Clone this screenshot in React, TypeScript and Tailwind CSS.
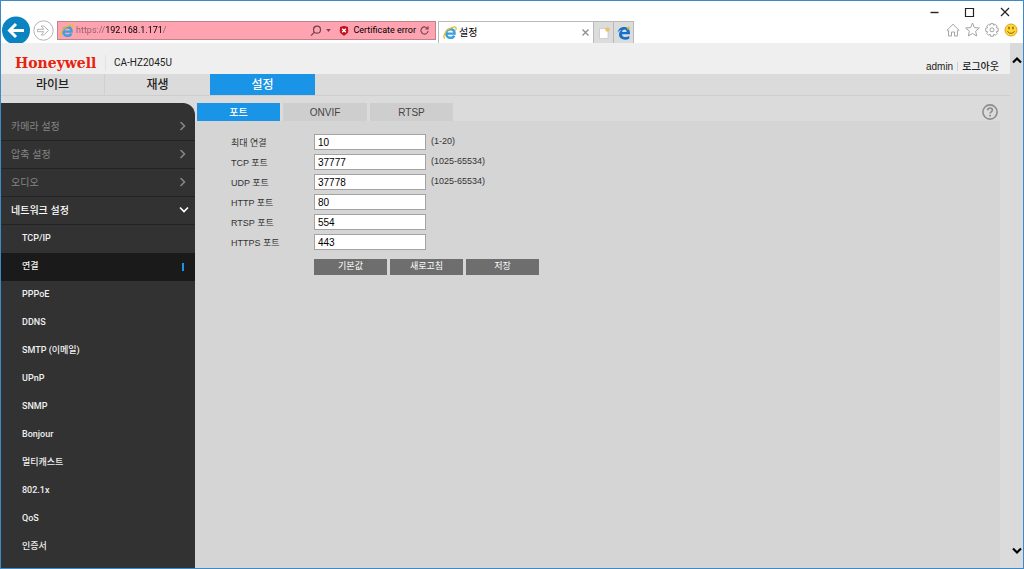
import React, { useState } from 'react';

const MENU = ['카메라 설정', '압축 설정', '오디오'];

const NETWORK_MENU = [
  'TCP/IP',
  '연결',
  'PPPoE',
  'DDNS',
  'SMTP (이메일)',
  'UPnP',
  'SNMP',
  'Bonjour',
  '멀티캐스트',
  '802.1x',
  'QoS',
  '인증서',
];

const FIELDS = [
  { id: 'max', label: '최대 연결', value: '10', hint: '(1-20)' },
  { id: 'tcp', label: 'TCP 포트', value: '37777', hint: '(1025-65534)' },
  { id: 'udp', label: 'UDP 포트', value: '37778', hint: '(1025-65534)' },
  { id: 'http', label: 'HTTP 포트', value: '80', hint: '' },
  { id: 'rtsp', label: 'RTSP 포트', value: '554', hint: '' },
  { id: 'https', label: 'HTTPS 포트', value: '443', hint: '' },
];

const IeLogo = () => (
  <svg className="w-[14px] h-[14px] shrink-0" viewBox="0 0 14 14" fill="none">
    <path d="M3.4 7.6h8.2C11.6 4.8 9.9 3.2 7.5 3.2S3.3 5 3.3 7.5s1.7 4.3 4.2 4.3c1.8 0 3.1-.8 3.8-2.2" stroke="#3aa0de" strokeWidth="2.4" />
    <path d="M2.2 12.6C-.2 12 .7 8 4 4.6 7.4 1.2 12 .1 12.9 1.6c.4.7.2 1.8-.4 2.9" stroke="#e9bd2c" strokeWidth="1.3" />
  </svg>
);

const Chevron = ({ d, width = 1.6 }: { d: string; width?: number }) => (
  <svg className="w-[10px] h-[10px] shrink-0" viewBox="0 0 10 10" fill="none" stroke="currentColor" strokeWidth={width}>
    <path d={d} />
  </svg>
);

const BrowserBar = () => (
  <div className="shrink-0 bg-white text-[10px] font-['Roboto','Noto_Sans_CJK_KR',sans-serif]">
    {/* Window buttons */}
    <div className="h-5 flex justify-end items-end gap-[19px] pr-[10px]">
      <button aria-label="Minimize">
        <svg className="w-4 h-4" viewBox="0 0 16 16" stroke="#222"><path d="M3.5 7.5h8" strokeWidth="1.4" /></svg>
      </button>
      <button aria-label="Maximize">
        <svg className="w-4 h-4" viewBox="0 0 16 16" fill="none" stroke="#222"><path d="M3.5 3.5h8v8h-8z" strokeWidth="1.2" /></svg>
      </button>
      <button aria-label="Close">
        <svg className="w-4 h-4" viewBox="0 0 16 16" stroke="#222"><path d="M4 3l8 8M12 3l-8 8" strokeWidth="1.2" /></svg>
      </button>
    </div>

    {/* Address bar and tabs */}
    <div className="h-[22px] flex items-start">
      <button aria-label="Back" className="w-8 h-[22px] flex items-end">
        <svg className="w-[30px] h-[27px] shrink-0" viewBox="0 0 30 27" fill="none">
          <circle cx="15" cy="14.5" r="14" fill="#0a84c1" />
          <path d="M23 14.5H9M15 8l-6.5 6.5 6.5 6.5" stroke="#fff" strokeWidth="3" />
        </svg>
      </button>
      <button aria-label="Forward" className="w-6 h-[19px] flex items-center">
        <svg className="w-[21px] h-[21px] shrink-0" viewBox="0 0 21 21" fill="none" stroke="#b3b3b3">
          <circle cx="10.5" cy="10.5" r="9.7" />
          <path d="M4.5 9.3h6.3L8.2 6h2.6l4.7 4.5-4.7 4.500H8.200l2.600-3.300H4.500z" />
        </svg>
      </button>
      <div className="w-[379px] h-[19px] flex items-center border border-[#b8858e] bg-[#ffa3b1] px-[2px] text-[9px]">
        <IeLogo />
        <input
          type="text"
          aria-label="Address"
          defaultValue="https://192.168.1.171/"
          className="flex-1 min-w-0 ml-[2px] bg-[linear-gradient(90deg,#8d6068_30px,#000_30px,#000_87px,#8d6068_87px)] bg-clip-text text-transparent outline-none"
        />
        <button aria-label="Search" className="flex items-center">
          <svg className="w-3 h-3" viewBox="0 0 12 12" fill="none" stroke="#6e464d" strokeWidth="1.2">
            <circle cx="7" cy="4.7" r="3.5" />
            <path d="M4.500 7.200L1 10.700" />
          </svg>
          <svg className="w-[5px] h-[3px] ml-1" viewBox="0 0 6 4"><path d="M0 0h6L3 4z" fill="#6e464d" /></svg>
        </button>
        <svg className="w-[10px] h-[10px] ml-2 mr-1" viewBox="0 0 10 10">
          <path d="M1 1l4-1 4 1v5L5 10 1 6z" fill="#c3141c" />
          <circle cx="5" cy="4.5" r="4.3" fill="#c3141c" />
          <path d="M3.200 2.700l3.600 3.600M6.800 2.700L3.200 6.300" stroke="#fff" strokeWidth="1.4" />
        </svg>
        <span className="text-black">Certificate error</span>
        <button aria-label="Refresh" className="mx-1">
          <svg className="w-[9px] h-[9px]" viewBox="0 0 10 10" fill="none" stroke="#6e464d" strokeWidth="1.2">
            <path d="M8.500 3A4 4 0 1 0 9 5.500M9 .3v3H6" />
          </svg>
        </button>
      </div>
      <div className="flex h-[22px] ml-[2px] border-x border-t border-[#b9b9b9]">
        <div className="w-[154px] flex items-center px-1 text-black">
          <IeLogo />
          <span className="flex-1 ml-[2px]">설정</span>
          <button aria-label="Close tab">
            <svg className="w-[7px] h-[7px]" viewBox="0 0 7 7" stroke="#8f8f8f"><path d="M.5.5l6 6M6.500.5l-6 6" strokeWidth="1.4" /></svg>
          </button>
        </div>
        <button aria-label="New tab" className="w-5 flex items-center justify-center border-l border-[#b9b9b9] bg-[#dcdcdc]">
          <svg className="w-3 h-3" viewBox="0 0 12 12">
            <path d="M1.500 1.500h6l2.500 2.500v7.500H1.500z" fill="#fff" stroke="#bbb" strokeWidth=".6" />
            <circle cx="9.5" cy="2.5" r="2.2" fill="#eac46c" />
          </svg>
        </button>
        <button aria-label="Edge" className="w-5 flex items-center justify-center border-l border-[#b9b9b9] bg-[#dcdcdc]">
          <svg className="w-[14px] h-[14px]" viewBox="0 0 14 14">
            <path d="M.7 6.500C1.200 3 3.700.9 7 .9c3.700 0 6 2.600 6 6v1.300H5c.1 2 1.600 2.900 3.600 2.900 1.400 0 2.700-.4 3.700-1v2.700c-1.200.6-2.600.9-4.200.9C4.500 13.700 2 11.800 2 8.600c0-2.100 1.100-3.600 2.800-4.500C3.200 4.200 1.700 5 .7 6.500zM5.100 5.900h4.500c0-1.400-.7-2.300-2.100-2.300S5.300 4.500 5.100 5.900z" fill="#1672c8" />
            <path d="M11.500 0l.6 1.300 1.400.2-1 1 .2 1.400-1.200-.7-1.200.7.2-1.400-1-1 1.400-.2z" fill="#d9c33a" />
          </svg>
        </button>
      </div>
      <div className="flex-1 h-[17px] flex items-center justify-end gap-[5px] pr-[5px]">
        <button aria-label="Home">
          <svg className="w-[14px] h-[14px]" viewBox="0 0 14 14" fill="none" stroke="#a3a3a3">
            <path d="M1 7.200L7 1.300l6 5.900-1 1-.6-.6v5.400H8.500V9h-3v4H2.600V7.600L2 8.200z" />
          </svg>
        </button>
        <button aria-label="Favorites">
          <svg className="w-[15px] h-[15px]" viewBox="0 0 15 15" fill="none" stroke="#a3a3a3">
            <path d="M7.500 1l1.900 4.600 4.900.4-3.700 3.200 1.100 4.800-4.200-2.600L3.300 14l1.100-4.800L.7 6l4.900-.4z" />
          </svg>
        </button>
        <button aria-label="Tools">
          <svg className="w-[14px] h-[14px]" viewBox="0 0 14 14" fill="none" stroke="#a3a3a3">
            <path d="M5.700.6h2.600l.4 1.700 1.700-1 1.800 1.800-1 1.600 2 .6v2.900l-2 .6 1 1.600-1.800 1.900-1.700-1-.5 2H5.700l-.5-2-1.600 1-1.900-1.900 1-1.600-2-.6V5.300l2-.6-1-1.600 1.900-1.800 1.600 1z" />
            <circle cx="7" cy="6.8" r="2" />
          </svg>
        </button>
        <button aria-label="Feedback">
          <svg className="w-[14px] h-[14px]" viewBox="0 0 14 14" fill="none">
            <circle cx="7" cy="7" r="6" fill="#ffd735" stroke="#d9a521" />
            <path d="M5 3.800v2.400M9 3.800v2.400" stroke="#6b4a10" strokeWidth="1.2" />
            <path d="M3.500 8.200c1.300 2.800 5.700 2.800 7 0" stroke="#8a6415" />
          </svg>
        </button>
      </div>
    </div>
  </div>
);

const Sidebar = () => (
  <aside className="w-[194px] shrink-0 overflow-hidden rounded-tr-xl bg-[#323232] pt-[10px] text-[10px]">
    {MENU.map((item) => (
      <button key={item} className="w-full h-7 flex items-center justify-between border-b border-[#232323] pl-[10px] pr-[7px] text-[#858585]">
        {item}
        <Chevron d="M2.500 0l4 4-4 4" />
      </button>
    ))}
    <button className="w-full h-7 flex items-center justify-between border-b border-[#232323] pl-[10px] pr-[6px] font-medium text-white">
      네트워크 설정
      <Chevron d="M1 1.500l4 4 4-4" />
    </button>
    <nav className="text-[9px] font-medium text-[#f0f0f0] font-['Roboto','Noto_Sans_CJK_KR',sans-serif]">
      {NETWORK_MENU.map((item) => (
        <a
          key={item}
          href="#"
          className={`h-7 flex items-center justify-between pl-[21px] pr-[11px] ${item === '연결' ? 'bg-[#1a1a1a]' : ''}`}
        >
          {item}
          {item === '연결' && <span className="w-[2px] h-2 bg-[#1a94e6]" />}
        </a>
      ))}
    </nav>
  </aside>
);

const PortForm = () => {
  const [values, setValues] = useState(FIELDS.map((f) => f.value));

  const change = (index: number, value: string) => {
    setValues(values.map((v, i) => (i === index ? value : v)));
  };

  return (
    <form className="flex flex-col pt-[11px] pl-9 text-[9px] text-[#333]" onSubmit={(e) => e.preventDefault()}>
      {FIELDS.map((field, i) => (
        <div key={field.id} className="h-5 flex items-center">
          <label htmlFor={field.id} className="w-[83px] pt-1">{field.label}</label>
          <input
            id={field.id}
            value={values[i]}
            onChange={(e) => change(i, e.target.value)}
            className="w-28 h-4 border border-[#a3a3a3] bg-white px-[3px] text-[10px] text-black"
          />
          <span className="ml-[5px]">{field.hint}</span>
        </div>
      ))}
      <div className="flex gap-[3px] pt-[7px] pl-[83px]">
        <button type="button" className="w-[73px] h-4 bg-[#6e6e6e] text-white">기본값</button>
        <button type="button" className="w-[73px] h-4 bg-[#6e6e6e] text-white">새로고침</button>
        <button type="submit" className="w-[73px] h-4 bg-[#6e6e6e] text-white">저장</button>
      </div>
    </form>
  );
};

export const App: React.FC = () => {
  return (
    <div className="h-screen flex flex-col overflow-hidden border border-[#3d8ac7] bg-[#dbdbdb] font-['Liberation_Sans','Noto_Sans_CJK_KR',sans-serif]">
      <BrowserBar />

      <div className="flex-1 min-h-0 flex">
        <div className="flex-1 min-w-0 flex flex-col">
          {/* Header */}
          <header className="h-[31px] shrink-0 flex items-center bg-[#efefef] pl-[14px] pr-[11px] pt-2">
            <h1 className="w-[91px] border-r border-[#e2e2e2] text-[14px] leading-4 font-black text-[#e8220c] font-['DejaVu_Serif',serif]">
              Honeywell
            </h1>
            <span className="flex-1 ml-2 text-[10px] text-[#222] font-['Roboto',sans-serif]">CA-HZ2045U</span>
            <div className="flex items-center gap-1 pt-2 text-[10px] font-medium text-[#222]">
              <span>admin</span>
              <span className="w-px h-[9px] bg-[#cfcfcf]" />
              <a href="#">로그아웃</a>
            </div>
          </header>

          {/* Main tabs */}
          <nav className="h-[22px] shrink-0 flex border-b border-[#cecece] text-[12px] font-medium text-[#222]">
            <button className="w-[104px] border-r border-[#d0d0d0]">라이브</button>
            <button className="w-[105px]">재생</button>
            <button className="w-[105px] bg-[#1a94e6] text-white">설정</button>
          </nav>

          <div className="flex-1 min-h-0 flex pt-[7px]">
            <Sidebar />
            <main className="flex-1 flex flex-col pr-[10px]">
              <div className="h-[18px] shrink-0 flex gap-[3px] pl-[2px] text-[10px] text-[#444]">
                <button className="w-[83px] bg-[#1a94e6] font-medium text-white">포트</button>
                <button className="w-[84px] bg-[#cecece]">ONVIF</button>
                <button className="w-[83px] bg-[#cecece]">RTSP</button>
                <button aria-label="Help" className="ml-auto mr-[2px]">
                  <svg className="w-4 h-4" viewBox="0 0 16 16" fill="none" stroke="#8c8c8c">
                    <circle cx="8" cy="8" r="7.1" strokeWidth="1.6" />
                    <path d="M5.700 6.300c0-3.100 4.700-3 4.700-.2 0 1.800-2.300 1.700-2.300 3.500M8.100 10.800v1.600" strokeWidth="1.7" />
                  </svg>
                </button>
              </div>
              <div className="flex-1 bg-[#d5d5d5]">
                <PortForm />
              </div>
            </main>
          </div>
        </div>

        {/* Scrollbar */}
        <div className="w-[13px] flex flex-col items-center justify-between bg-[#dadada] pt-3 pb-3 text-black">
          <Chevron d="M1 7.500l4-4 4 4" width={2.2} />
          <Chevron d="M1 2.500l4 4 4-4" width={2.2} />
        </div>
      </div>
    </div>
  );
};

export default App;
